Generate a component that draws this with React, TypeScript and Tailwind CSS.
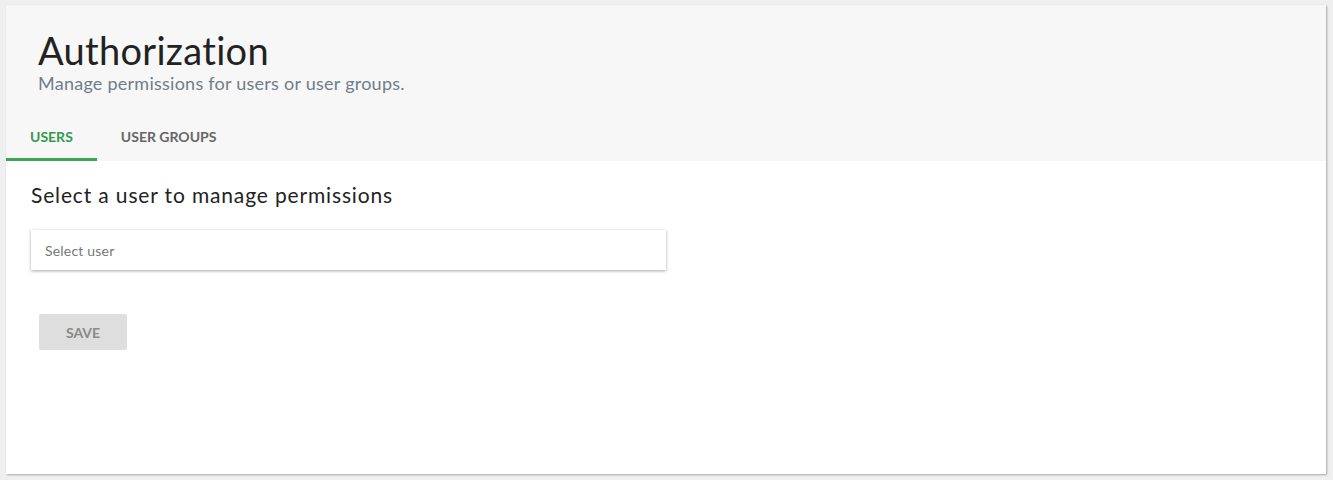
export default function App() {
  return (
    <div className="min-h-[480px] bg-[#efefef] pt-[5px] pl-[6px] pr-[7px] pb-[6px] font-['Lato',sans-serif]">
      <div className="h-[469px] bg-white shadow-[1px_1px_2px_rgba(0,0,0,0.3)] flex flex-col">
        {/* Header */}
        <div className="bg-[#f7f7f7] pt-[22px]">
          <div className="pl-[32px]">
            <h1 className="text-[38px] leading-[46px] text-[#222] tracking-[0.3px]">Authorization</h1>
            <p className="text-[18px] leading-[20px] text-[#707d89] tracking-[0.25px]">
              Manage permissions for users or user groups.
            </p>
          </div>
          <div className="mt-[22px] flex">
            <button className="h-[46px] px-[24px] text-[14px] font-bold text-[#339a4e] border-b-[3px] border-[#3aa556]">
              USERS
            </button>
            <button className="h-[46px] px-[24px] text-[14px] font-bold text-[#666] border-b-[3px] border-transparent">
              USER GROUPS
            </button>
          </div>
        </div>

        {/* Body */}
        <div className="px-[25px] pt-[20px]">
          <h2 className="text-[21px] leading-[28px] text-[#222] tracking-[0.85px]">Select a user to manage permissions</h2>
          <div className="mt-[21px] w-[635px] h-[40px] bg-white shadow-[0_1px_3px_rgba(0,0,0,0.35)] flex items-center px-[14px]">
            <span className="text-[14px] text-[#777] tracking-[0.2px]">Select user</span>
          </div>
          <button
            disabled
            className="mt-[44px] ml-[8px] w-[88px] h-[36px] rounded-[2px] bg-[#dedede] text-[14px] font-bold text-[#8a8a8a]"
          >
            SAVE
          </button>
        </div>
      </div>
    </div>
  );
}
